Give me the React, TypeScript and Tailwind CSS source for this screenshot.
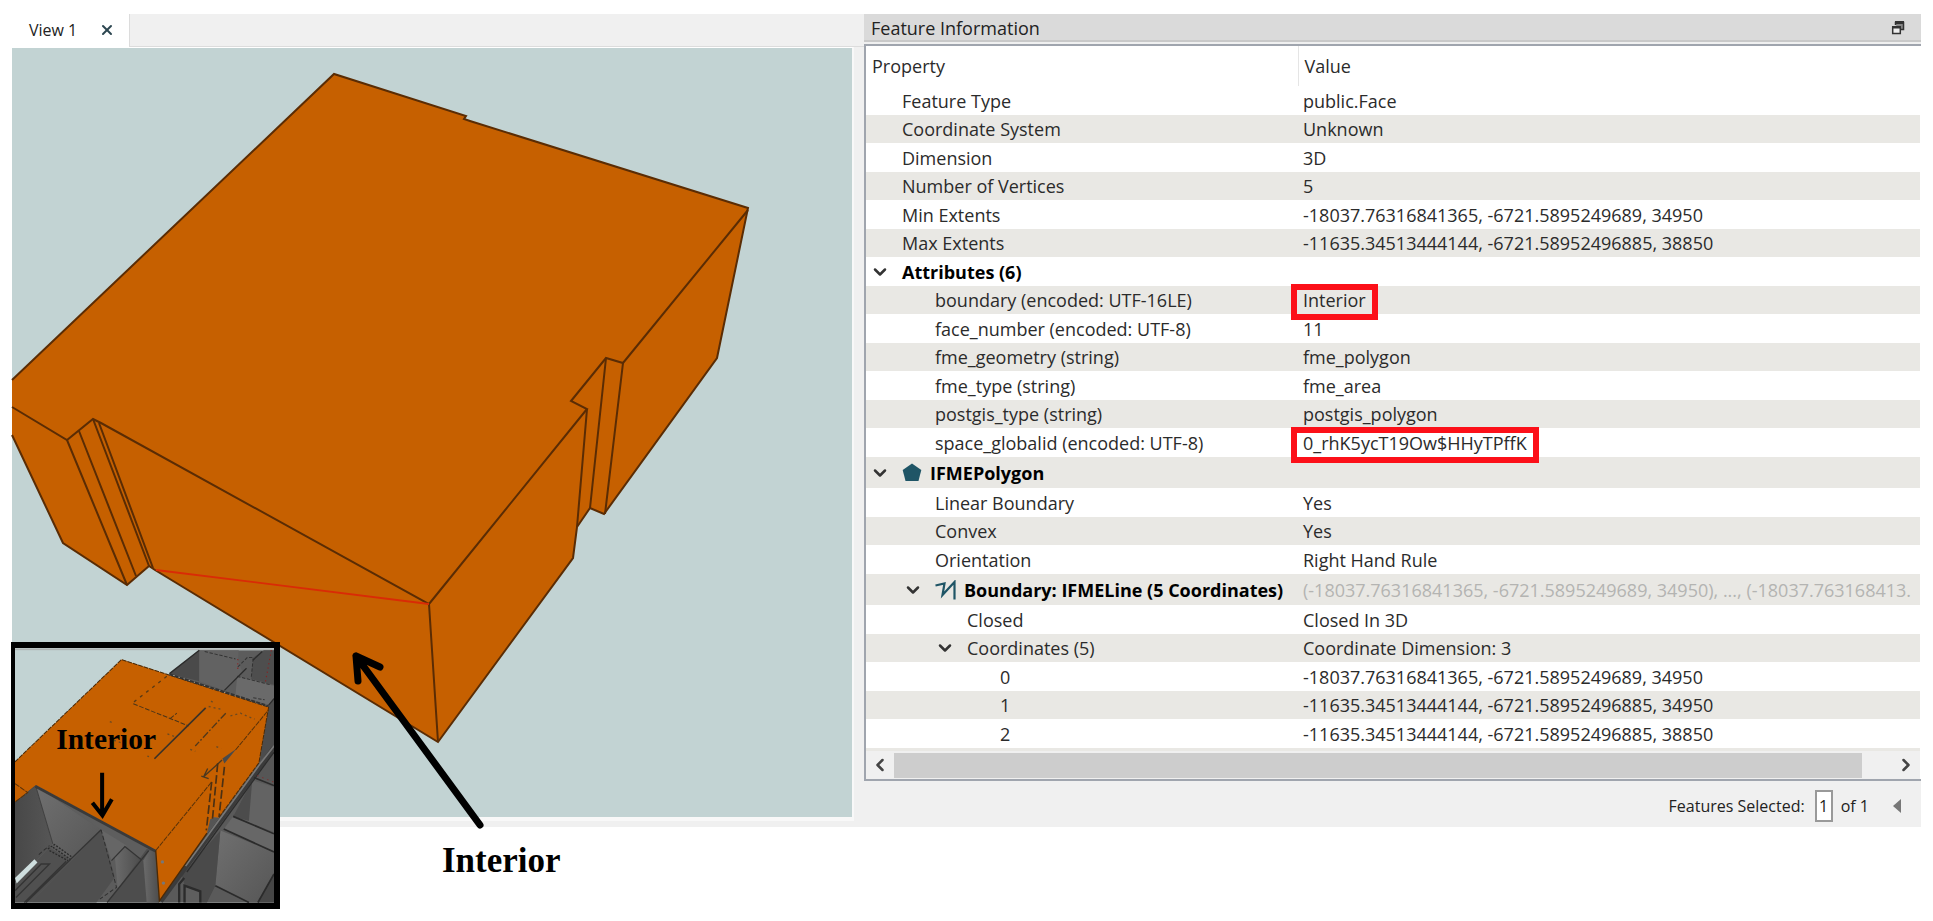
import type { ReactNode } from "react";
import { ChevronDown, ChevronLeft, ChevronRight, X } from "lucide-react";

type Row = {
  label: string;
  value?: string;
  level: number;
  open?: boolean;
  bold?: boolean;
  muted?: boolean;
  marked?: boolean;
  icon?: ReactNode;
};

function PolygonIcon() {
  return (
    <svg viewBox="0 0 20 19" className="h-[19px] w-5 shrink-0" aria-hidden="true">
      <path d="M10 0.5 L19.3 7 L16.5 18 H3.5 L0.7 7 Z" fill="#1f5566" />
    </svg>
  );
}

function LineIcon() {
  return (
    <svg viewBox="0 0 21 20" className="h-5 w-[21px] shrink-0" aria-hidden="true">
      <path d="M0.5 5.5 L9.5 3.5 L7.5 15 L19.5 2 V19.5" fill="none" stroke="#1f5566" strokeWidth="2.2" />
    </svg>
  );
}

const rows: Row[] = [
  { label: "Feature Type", value: "public.Face", level: 0 },
  { label: "Coordinate System", value: "Unknown", level: 0 },
  { label: "Dimension", value: "3D", level: 0 },
  { label: "Number of Vertices", value: "5", level: 0 },
  { label: "Min Extents", value: "-18037.76316841365, -6721.5895249689, 34950", level: 0 },
  { label: "Max Extents", value: "-11635.34513444144, -6721.58952496885, 38850", level: 0 },
  { label: "Attributes (6)", level: 0, open: true, bold: true },
  { label: "boundary (encoded: UTF-16LE)", value: "Interior", level: 1, marked: true },
  { label: "face_number (encoded: UTF-8)", value: "11", level: 1 },
  { label: "fme_geometry (string)", value: "fme_polygon", level: 1 },
  { label: "fme_type (string)", value: "fme_area", level: 1 },
  { label: "postgis_type (string)", value: "postgis_polygon", level: 1 },
  { label: "space_globalid (encoded: UTF-8)", value: "0_rhK5ycT19Ow$HHyTPffK", level: 1, marked: true },
  { label: "IFMEPolygon", level: 0, open: true, bold: true, icon: <PolygonIcon /> },
  { label: "Linear Boundary", value: "Yes", level: 1 },
  { label: "Convex", value: "Yes", level: 1 },
  { label: "Orientation", value: "Right Hand Rule", level: 1 },
  {
    label: "Boundary: IFMELine (5 Coordinates)",
    value: "(-18037.76316841365, -6721.5895249689, 34950), ..., (-18037.763168413.",
    level: 1,
    open: true,
    bold: true,
    muted: true,
    icon: <LineIcon />,
  },
  { label: "Closed", value: "Closed In 3D", level: 2 },
  { label: "Coordinates (5)", value: "Coordinate Dimension: 3", level: 2, open: true },
  { label: "0", value: "-18037.76316841365, -6721.5895249689, 34950", level: 3 },
  { label: "1", value: "-11635.34513444144, -6721.58952496885, 34950", level: 3 },
  { label: "2", value: "-11635.34513444144, -6721.58952496885, 38850", level: 3 },
];

const indents = ["pl-1", "pl-[37px]", "pl-[69px]", "pl-[102px]"];

function rowHeight(row: Row, index: number) {
  if (row.icon) return "h-[31px] bg-[#e9e8e4]";
  return index % 2 ? "h-7 bg-[#e9e8e4]" : "h-[29px] bg-white";
}

function PropertyTable() {
  return (
    <table className="w-full table-fixed border-collapse text-left text-lg leading-7 text-[#2b2b2b]">
      <thead>
        <tr className="h-10">
          <th className="w-[432px] p-0 pl-1.5 font-normal leading-6">Property</th>
          <th className="border-l border-[#e5e5e5] p-0 pl-1.5 font-normal leading-6">Value</th>
        </tr>
      </thead>
      <tbody>
        {rows.map((row, i) => (
          <tr key={i} className={rowHeight(row, i)}>
            <td className={`p-0 whitespace-nowrap ${indents[row.level]}`}>
              <div className="flex items-center">
                <span className="w-8 shrink-0">
                  {row.open && (
                    <button type="button" aria-label={`Collapse ${row.label}`} className="block">
                      <ChevronDown className="h-5 w-5 text-[#333]" strokeWidth={3} />
                    </button>
                  )}
                </span>
                {row.icon}
                <span className={`${row.bold ? "font-bold text-black" : ""} ${row.icon ? "pl-2" : ""}`}>
                  {row.label}
                </span>
              </div>
            </td>
            <td className={`p-0 pl-[5px] whitespace-nowrap ${row.muted ? "overflow-hidden text-[#b4b4b2]" : ""}`}>
              <span className="relative">
                {row.value}
                {row.marked && (
                  <span className="absolute -inset-x-3 -top-1 -bottom-2 border-6 border-[#fc1019]" />
                )}
              </span>
            </td>
          </tr>
        ))}
      </tbody>
    </table>
  );
}

function Solid() {
  return (
    <svg
      viewBox="12 48 840 769"
      preserveAspectRatio="xMinYMin meet"
      className="min-h-0 w-full flex-1 overflow-visible bg-[#c2d3d3]"
      role="img"
      aria-label="3D solid with an interior face"
    >
      <path
        d="M12 380 L334 74 L466 116 L464 119 L470 121 L748 208 L717 358 L604 514 L590 508 L577 527 L573 558 L438 742 L155 570 L149 566 L127 585 L63 543 L12 435 Z"
        fill="#c66000"
      />
      <g fill="none" stroke="#5a2c04" strokeWidth="2">
        <path d="M12 380 L334 74 L466 116 L464 119 L470 121 L748 208 L717 358 L604 514 L590 508 L577 527 L573 558 L438 742 L155 570 L149 566 L127 585 L63 543 L12 435" />
        <path d="M12 407 L67 440 L93 419 L101 423 L429 604 L438 742" />
        <path d="M429 604 L587 409 L571 401 L606 358 L623 363 L748 210" />
        <path d="M67 440 L127 585 M79 431 L136 576 M93 419 L149 566 M99 423 L153 568" />
        <path d="M587 409 L577 527 M606 358 L590 508 M623 363 L605 514" />
      </g>
      <path d="M156 570 L429 604" stroke="#d92b06" strokeWidth="1.8" />
      <path
        d="M480 825 L356 656 M358 681 L356 656 L380 667"
        fill="none"
        stroke="#000"
        strokeWidth="7"
        strokeLinecap="round"
        strokeLinejoin="round"
      />
    </svg>
  );
}

function InsetView() {
  return (
    <svg viewBox="47 57 773 758" className="block h-full w-full" role="img" aria-label="Building context">
      <defs>
        <linearGradient id="wallA" x1="0" y1="0" x2="1" y2="0">
          <stop offset="0" stopColor="#484848" />
          <stop offset="1" stopColor="#565656" />
        </linearGradient>
        <linearGradient id="wallB" x1="0" y1="0" x2="1" y2="0">
          <stop offset="0" stopColor="#6b6b6b" />
          <stop offset="1" stopColor="#4c4c4c" />
        </linearGradient>
        <linearGradient id="floor" x1="0" y1="0" x2="1" y2="1">
          <stop offset="0" stopColor="#707070" />
          <stop offset="1" stopColor="#565656" />
        </linearGradient>
      </defs>
      <rect x="47" y="57" width="773" height="758" fill="#c2d3d3" />
      <path d="M508 132 L597 62 H820 V815 H47 V515 L108 465 L470 660 L800 230 Z" fill="#5c5c5c" />
      <rect x="47" y="57" width="773" height="5" fill="#b0b4b4" />

      {/* rooms behind the solid */}
      <path d="M508 132 L597 62 V155 Z" fill="#4a4a4a" />
      <path d="M597 62 H715 L712 90 L725 125 L672 182 L597 155 Z" fill="#626262" />
      <path d="M758 84 L790 62 H820 V165 L752 148 Z" fill="#4e4e4e" />
      <path d="M710 140 L820 168 V205 L804 228 L705 196 Z" fill="#6a6a6a" />
      <path d="M804 230 L820 205 V345 L778 395 Z" fill="#4c4c4c" />
      <path d="M613 66 L705 88 M712 112 L740 84 L758 84 L752 145 M710 140 L812 166 M758 204 L792 210" fill="none" stroke="#333" strokeWidth="3" strokeDasharray="10 5" />
      <path d="M508 132 L597 62 M672 182 L738 116 M785 66 L757 92 M804 226 L820 207" stroke="#2c2c2c" strokeWidth="4" />
      <path d="M812 62 L794 160 M712 88 V120" stroke="#8b2020" strokeWidth="3" strokeDasharray="4 9" />

      {/* rooms right of the solid */}
      <path d="M778 395 L820 345 V815 H480 L620 610 Z" fill="#5a5a5a" />
      <path d="M775 405 L820 350 V455 L762 440 Z" fill="#565656" />
      <path d="M755 450 L820 470 V605 L698 558 Z" fill="#636363" />
      <path d="M755 450 L745 572 L698 558 Z" fill="#4c4c4c" />
      <path d="M698 558 L820 610 V665 L670 596 Z" fill="#676767" />
      <path d="M660 600 L820 665 V730 L772 815 H745 L645 765 Z" fill="url(#floor)" />
      <path d="M660 600 L645 765 L620 815 H600 V782 L553 762 L545 735 Z" fill="#4a4a4a" />
      <path d="M820 730 L772 815 H820 Z" fill="#464646" />
      <path d="M553 765 L600 782 V815 H553 Z" fill="#5e5e5e" />
      <path d="M820 352 L782 404 L482 812" fill="none" stroke="#3b3b3b" strokeWidth="14" />
      <path d="M820 348 L778 402 L556 706" fill="none" stroke="#777" strokeWidth="5" />
      <path d="M820 366 L560 724" fill="none" stroke="#2c2c2c" strokeWidth="4" />
      <path d="M760 442 L820 466 M698 558 L820 610 M670 596 L820 664 M645 765 L745 815 M820 730 L772 815" fill="none" stroke="#2b2b2b" strokeWidth="5" />
      <path d="M537 815 V760 L552 742 M553 815 V765 L600 782 V815" fill="none" stroke="#2b2b2b" strokeWidth="7" />
      <path d="M770 436 L820 456" stroke="#7a3030" strokeWidth="3" strokeDasharray="4 12" />

      {/* rooms in front of the solid */}
      <path d="M47 515 L108 465 L160 640 L47 755 Z" fill="url(#wallA)" />
      <path d="M108 465 L304 598 L215 690 L160 640 Z" fill="url(#floor)" />
      <path d="M108 465 L470 660 L425 690 L304 598 Z" fill="#5e5e5e" />
      <path d="M304 598 L345 740 L290 815 H95 Z" fill="#4f4f4f" />
      <path d="M304 598 L380 645 L335 690 Z" fill="#666" />
      <path d="M345 675 L375 650 L425 690 L355 790 Z" fill="url(#wallB)" />
      <path d="M470 660 L440 655 L325 815 H478 Z" fill="#4d4d4d" />
      <path d="M448 660 L470 660 L477 815 H440 L430 690 Z" fill="url(#wallB)" />
      <path d="M47 760 L150 650 L215 690 L95 815 H47 Z" fill="#505050" />
      <path d="M47 742 L105 686 L114 696 L52 758 Z" fill="#cfdfdf" />
      <path d="M304 598 L80 815 M322 815 L446 660 M335 690 L375 648 L425 688 M47 780 L125 700 L150 700 L50 800 M200 692 L75 815" fill="none" stroke="#343434" strokeWidth="4" />
      <path d="M108 465 L160 640 M47 515 L108 465" fill="none" stroke="#414141" strokeWidth="3" />
      <path d="M304 598 L350 770 L300 805 M118 672 L150 645" fill="none" stroke="#2f2f2f" strokeWidth="3" strokeDasharray="12 7" />
      <path d="M145 655 L165 642 L215 678 M150 660 L205 690 M160 650 L212 686" fill="none" stroke="#2a2a2a" strokeWidth="4" strokeDasharray="6 4" />

      {/* highlighted solid */}
      <path
        d="M47 395 L365 90 L804 232 L775 398 L655 562 L640 560 L620 608 L478 810 L467 660 L108 465 L47 515 Z"
        fill="#c66000"
      />
      <path d="M47 395 L365 90 L804 232 L775 398 L655 562" fill="none" stroke="#4a2a08" strokeWidth="3" strokeDasharray="14 3" />
      <path d="M508 134 L804 229" stroke="#333" strokeWidth="6" strokeDasharray="12 4" />
      <path d="M47 460 L85 487 L47 515 M467 660 L634 455 M705 360 L804 240" fill="none" stroke="#5a3208" strokeWidth="3" strokeDasharray="16 3" />
      <path d="M108 468 L467 662" stroke="#3a3a3a" strokeWidth="8" />
      <path d="M467 660 L478 810 L620 608" fill="none" stroke="#4a2a08" strokeWidth="4" />
      <path d="M500 140 L400 218" fill="none" stroke="#5a3a14" strokeWidth="4" strokeDasharray="9 14" />
      <path d="M400 222 L508 265 L565 288 M510 266 L530 250" fill="none" stroke="#4a3418" strokeWidth="3" strokeDasharray="14 5" />
      <path d="M463 386 L616 234" stroke="#3b3227" strokeWidth="5" />
      <path d="M676 250 L585 348" stroke="#51381b" strokeWidth="4" strokeDasharray="22 6 5 6" />
      <path d="M625 230 L660 238 M690 258 L720 250 L762 268 M502 312 L530 322 M570 358 L585 364 M632 214 L637 217 M648 350 L662 356 M330 275 L338 278 M442 378 L447 380 M300 316 L385 346" fill="none" stroke="#6b4a22" strokeWidth="4" strokeDasharray="6 9" />
      <path d="M708 356 L672 400 L666 385 Z" fill="#4a4a4a" />
      <path d="M665 390 L610 440 L622 415 M603 438 L625 445" fill="none" stroke="#4a3820" strokeWidth="4" />
      <path d="M634 455 L618 600 M652 400 L636 570 M672 410 L656 560" fill="none" stroke="#4b3013" strokeWidth="5" strokeDasharray="26 9" />
      <path d="M620 608 L630 566 L655 562 Z" fill="#555" />
      <circle cx="487" cy="694" r="5" fill="#777" />
      <circle cx="490" cy="757" r="5" fill="#777" />

      <text x="170" y="357" fontSize="88" fontWeight="bold" className="font-['Liberation_Serif',serif]">
        Interior
      </text>
      <path d="M307 428 V552 M278 517 L308 555 L336 507" fill="none" stroke="#000" strokeWidth="12" />
    </svg>
  );
}

export default function App() {
  return (
    <div className="bg-white px-3 pt-[14px] pb-10 font-['Open_Sans','Noto_Sans',sans-serif] text-[#222]">
      <div className="relative grid grid-cols-[852fr_1057fr] bg-[#f0f0f0]">
        <section className="flex min-w-0 flex-col pb-1.5">
          <div className="flex h-[33px]">
            <div className="flex w-[117px] shrink-0 items-center justify-between bg-white pr-[14px] pb-0.5 pl-[17px] text-base">
              <button type="button">View 1</button>
              <button type="button" aria-label="Close View 1">
                <X className="h-4 w-4 text-[#2c4650]" strokeWidth={3} />
              </button>
            </div>
            <div className="flex-1 border-b border-l border-[#dcdcdc]" />
          </div>
          <div className="mr-2.5 flex flex-1 flex-col border-t border-r-2 border-b-4 border-[#f8f8f8] border-t-white">
            <Solid />
          </div>
          <div className="absolute top-[628px] -left-px h-[267px] w-[269px] border-6 border-l-4 border-black">
            <InsetView />
          </div>
        </section>

        <section className="min-w-0">
          <header className="flex h-7 items-center justify-between border-b-2 border-[#c9c9c9] bg-[#dadada] pr-4 pl-[7px]">
            <h2 className="pt-0.5 text-lg leading-6">Feature Information</h2>
            <button type="button" aria-label="Float panel">
              <svg viewBox="0 0 14 15" className="h-[15px] w-3.5">
                <path d="M4.5 5 V2.5 H12.5 V9.5 H10" fill="#888" stroke="#333" strokeWidth="1.5" />
                <path d="M4 1 H13 V4 H4 Z" fill="#333" />
                <rect x="1.7" y="7" width="7.6" height="6.5" fill="#eee" stroke="#333" strokeWidth="1.5" />
                <path d="M1 6 H10 V8.5 H1 Z" fill="#333" />
              </svg>
            </button>
          </header>
          <div className="mt-0.5 border-y-2 border-l-2 border-[#a0a5ae] bg-white pr-px">
            <PropertyTable />
            <div className="h-[3px] bg-[#e9e8e4]" />
            <div className="flex h-7 items-center bg-[#f0f0f0]">
              <button type="button" aria-label="Scroll left" className="flex w-7 justify-center">
                <ChevronLeft className="h-5 w-5 text-[#444]" strokeWidth={3} />
              </button>
              <div className="flex-1">
                <div className="h-[25px] w-[97%] bg-[#cdcdcd]" />
              </div>
              <button type="button" aria-label="Scroll right" className="flex w-7 justify-center">
                <ChevronRight className="h-5 w-5 text-[#444]" strokeWidth={3} />
              </button>
            </div>
          </div>
          <footer className="flex h-[46px] items-center justify-end pt-1 pr-5 text-base">
            <label htmlFor="selected">Features Selected:</label>
            <input
              id="selected"
              defaultValue="1"
              className="mr-2 ml-2.5 h-8 w-[18px] border-2 border-[#999] bg-white text-center"
            />
            <span>of 1</span>
            <button type="button" aria-label="Previous feature" className="ml-6">
              <svg viewBox="0 0 8 14" className="h-3.5 w-2">
                <path d="M8 0 V14 L0 7 Z" fill="#777" />
              </svg>
            </button>
          </footer>
        </section>
      </div>
      <p className="pt-[14px] pl-[430px] font-['Liberation_Serif',serif] text-[35px] leading-10 font-bold text-black">
        Interior
      </p>
    </div>
  );
}
